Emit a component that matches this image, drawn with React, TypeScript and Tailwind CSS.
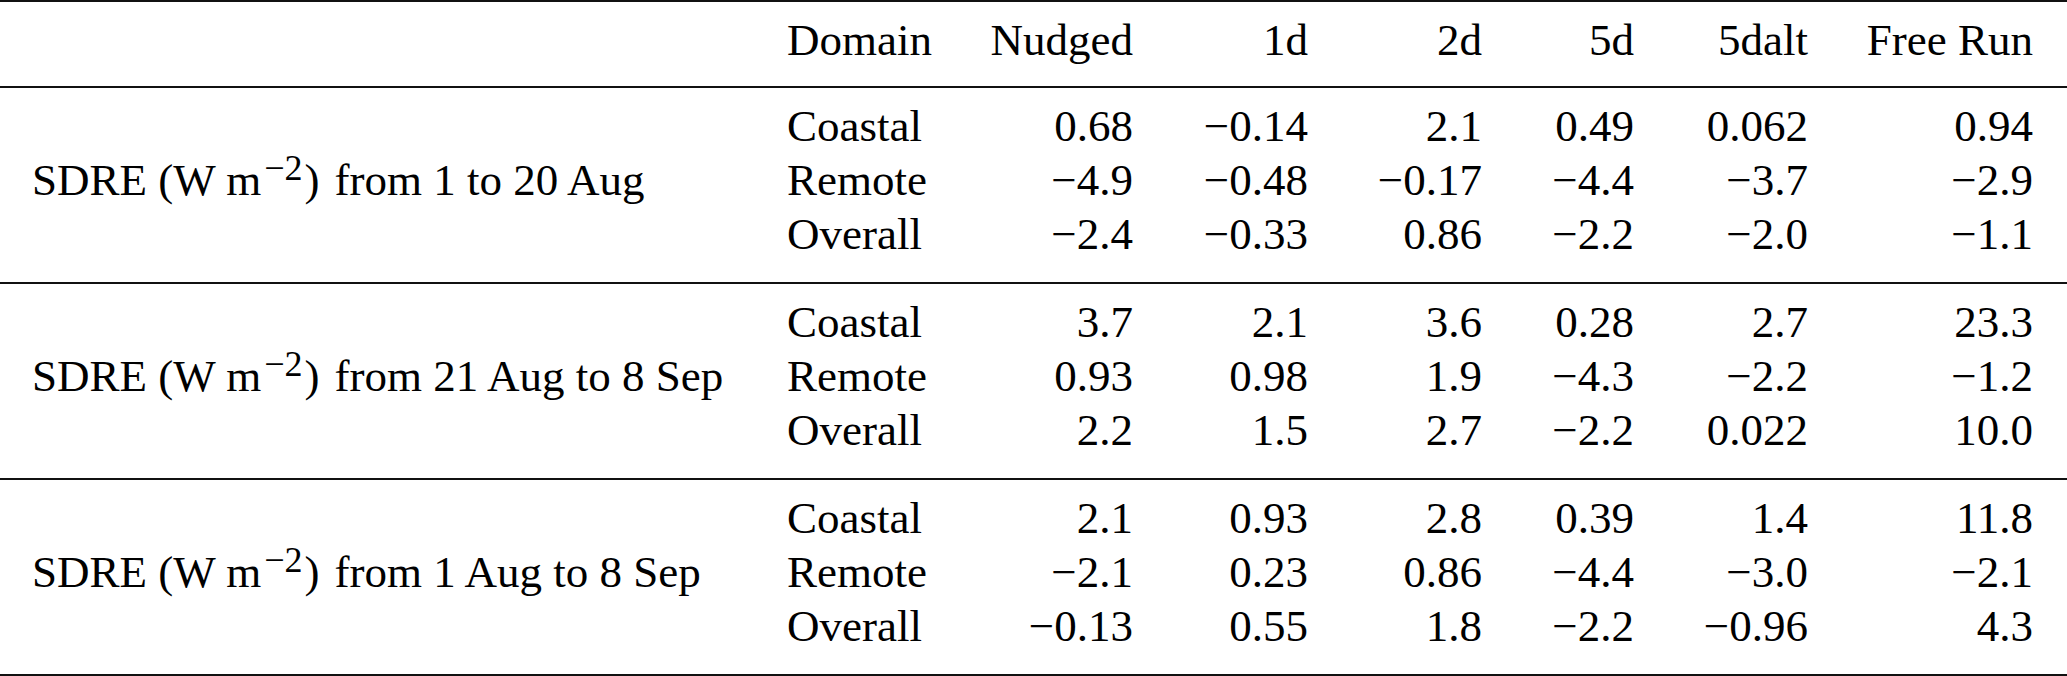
const MINUS = '\u2212';

type Group = { period: string; rows: string[][] };

const columns = ['Nudged', '1d', '2d', '5d', '5dalt', 'Free Run'];

const groups: Group[] = [
  {
    period: 'from 1 to 20 Aug',
    rows: [
      ['Coastal', '0.68', '−0.14', '2.1', '0.49', '0.062', '0.94'],
      ['Remote', '−4.9', '−0.48', '−0.17', '−4.4', '−3.7', '−2.9'],
      ['Overall', '−2.4', '−0.33', '0.86', '−2.2', '−2.0', '−1.1'],
    ],
  },
  {
    period: 'from 21 Aug to 8 Sep',
    rows: [
      ['Coastal', '3.7', '2.1', '3.6', '0.28', '2.7', '23.3'],
      ['Remote', '0.93', '0.98', '1.9', '−4.3', '−2.2', '−1.2'],
      ['Overall', '2.2', '1.5', '2.7', '−2.2', '0.022', '10.0'],
    ],
  },
  {
    period: 'from 1 Aug to 8 Sep',
    rows: [
      ['Coastal', '2.1', '0.93', '2.8', '0.39', '1.4', '11.8'],
      ['Remote', '−2.1', '0.23', '0.86', '−4.4', '−3.0', '−2.1'],
      ['Overall', '−0.13', '0.55', '1.8', '−2.2', '−0.96', '4.3'],
    ],
  },
];

const gridCols = 'grid grid-cols-[787px_168px_178px_175px_174px_152px_174px_225px] pr-[34px]';

function Label({ period }: { period: string }) {
  return (
    <div className="row-span-3 self-center pl-[32px] whitespace-nowrap">
      SDRE (W m
      <span className="relative -top-[15px] pl-[3px] pr-[2px] text-[36px] leading-none">{MINUS}2</span>)
      <span className="ml-[15px]">{period}</span>
    </div>
  );
}

export default function App() {
  return (
    <div className="w-[2067px] h-[676px] bg-white text-black font-['Liberation_Serif','Times_New_Roman',serif] text-[45px] leading-[54px] border-t-2 border-[#111]">
      {/* Header */}
      <div className={`${gridCols} pt-[11px] pb-[19px] border-b-2 border-[#111]`}>
        <div />
        <div>Domain</div>
        {columns.map((c) => (
          <div key={c} className="text-right">
            {c}
          </div>
        ))}
      </div>

      {/* Groups */}
      {groups.map((g) => (
        <div key={g.period} className={`${gridCols} pt-[11px] pb-[21px] border-b-2 border-[#111]`}>
          <Label period={g.period} />
          {g.rows.map((row) =>
            row.map((cell, i) => (
              <div key={row[0] + i} className={i === 0 ? 'col-start-2' : 'text-right'}>
                {cell}
              </div>
            ))
          )}
        </div>
      ))}
    </div>
  );
}
